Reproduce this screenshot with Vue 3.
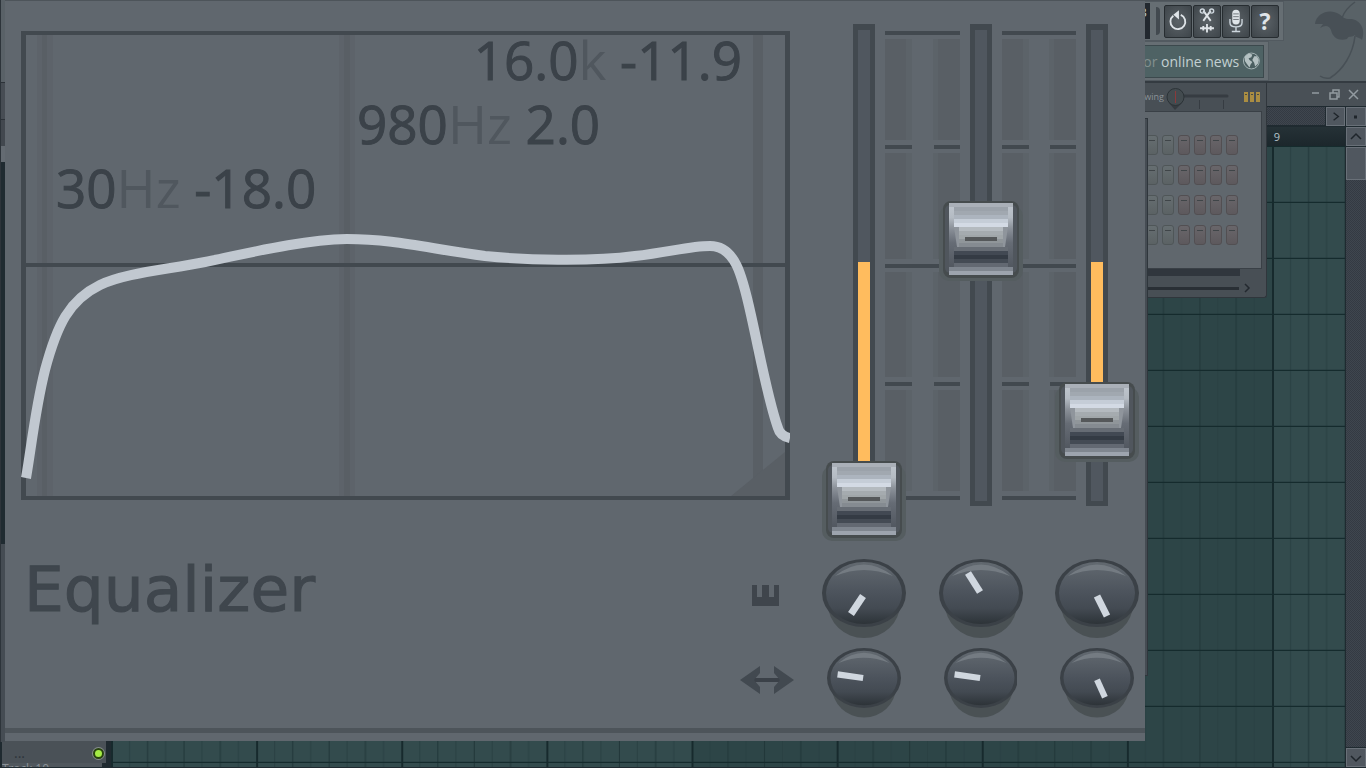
<template>
  <div class="desktop">
    <header class="toolbar">
      <div class="toolbar__groups">
        <div class="toolbar__row">
          <span class="toolbar__lcd">3</span>
          <span class="toolbar__grip" />
          <button v-for="tool in tools" :key="tool" class="tool" :aria-label="tool">
            <svg v-if="tool === 'Undo'" viewBox="0 0 28 33">
              <path d="M9 10.500 A8 8 0 1 0 17 9.500" class="stroke" />
              <path d="M15 4.500 V14.500 L9 9.500 Z" class="fill" />
            </svg>
            <svg v-else-if="tool === 'Cut'" viewBox="0 0 28 33">
              <path d="M10 16 L18 5 M18 16 L10 5" class="stroke" />
              <circle cx="9" cy="5.500" r="2.200" class="thin" />
              <circle cx="19" cy="5.500" r="2.200" class="thin" />
              <path d="M6.500 24 H21.500 M10 21.500 V26.500 M14 19.500 V28.500 M18 21.500 V26.500" class="stroke" />
            </svg>
            <svg v-else-if="tool === 'Record'" viewBox="0 0 28 33">
              <rect x="10" y="4" width="8" height="16" rx="4" class="fill" />
              <path d="M11 8.500 H17 M11 11.500 H17 M11 14.500 H17" stroke="#6a7076" />
              <path d="M7.500 14 V18 Q7.500 22.500 14 22.500 Q20.500 22.500 20.500 18 V14 M14 23 V27 M9.500 27.500 H18.500" class="thin" />
            </svg>
            <span v-else>?</span>
          </button>
        </div>
        <div class="toolbar__row toolbar__row--news">
          <a href="#" class="news">
            <span class="news__text"><i>Click for</i> online news</span>
            <svg class="news__globe" viewBox="0 0 18 18">
              <circle cx="9" cy="9" r="8.500" fill="#4b5f61" stroke="#a9b8b9" />
              <path d="M2 4 L6 1 L10 2 L9 5 L6 6 L7 8 L10 10 L8 13 L7 16 L4 12 L2 9 Z" fill="#b4c1c2" />
              <path d="M12 4 L15 4 L17 8 L16 12 L13 15 L12 11 L10 8 Z" fill="#b4c1c2" />
            </svg>
          </a>
        </div>
      </div>
      <svg class="toolbar__logo" viewBox="0 0 60 80">
        <path d="M9 23 C10 12 24 7 33 13 C37 16 38 18 44 18 C54 18 60 28 56 39 C54 36 49 37 49 34 C46 37 43 34 41 38 C34 40 27 38 25 29 C23 24 19 24 14 27 L17 23 Z" />
        <path d="M36 17 Q39 8 49 1 M49 35 C47 53 37 69 24 77 Q18 78 14 75" />
      </svg>
    </header>

    <main class="playlist">
      <div class="playlist__title">
        <button aria-label="Minimize"><svg viewBox="0 0 18 18"><path d="M5 7 H12" stroke-width="2" /></svg></button>
        <button aria-label="Restore"><svg viewBox="0 0 18 18"><path d="M4 7 H11 V13 H4 Z M7 7 V4 H13 V11 H11" /></svg></button>
        <button aria-label="Close"><svg viewBox="0 0 18 18"><path d="M4 4 L13 13 M13 4 L4 13" /></svg></button>
      </div>
      <div class="playlist__hscroll hatch" />
      <button class="key key--next" aria-label="Scroll right"><svg viewBox="0 0 18 18"><path d="M7 5 L12 9 L7 13" /></svg></button>
      <button class="key key--menu" aria-label="Zoom"><svg viewBox="0 0 18 18"><path d="M7 9 H10" /></svg></button>
      <div class="playlist__ruler"><span>9</span></div>
      <button class="key key--up" aria-label="Scroll up"><svg viewBox="0 0 18 18"><path d="M4 11 L9 6 L14 11" /></svg></button>
      <div class="playlist__tracks">
        <div class="track">
          <span class="track__dots">...</span>
          <span class="track__led" />
        </div>
        <div class="track-name">Track 10</div>
      </div>
      <svg class="playlist__grid">
        <defs>
          <pattern id="shade" width="1161" height="56" patternUnits="userSpaceOnUse">
            <rect width="1161" height="56" fill="#2d4547" />
            <rect width="581" height="56" fill="#334b4d" />
          </pattern>
          <pattern id="bars" width="145.125" height="56" patternUnits="userSpaceOnUse">
            <path d="M18.600 0 V56 M54.600 0 V56 M91 0 V56 M127.400 0 V56" stroke="#294042" />
            <path d="M36.600 0 V56 M73 0 V56 M109.300 0 V56" stroke="#203638" />
            <path d="M1 0 V56" stroke="#172a2d" stroke-width="2" />
          </pattern>
          <pattern id="rows" y="1" width="56" height="56" patternUnits="userSpaceOnUse">
            <path d="M0 55.500 H56" stroke="#152b2d" stroke-width="1.500" />
          </pattern>
        </defs>
        <rect v-for="p in ['shade', 'bars', 'rows']" :key="p" width="100%" height="100%" :fill="`url(#${p})`" />
      </svg>
      <div class="playlist__vscroll hatch"><span /></div>
      <button class="key key--down" aria-label="Scroll down"><svg viewBox="0 0 18 18"><path d="M4 7 L9 12 L14 7" /></svg></button>
    </main>

    <aside class="edge">
      <span v-for="n in 6" :key="n" :class="`edge__part edge__part--${n}`" />
    </aside>

    <!-- Channel rack window -->
    <section class="rack">
      <div class="rack__top">
        <span>Swing</span>
        <svg class="rack__swing" viewBox="0 0 64 28">
          <path d="M16 13 H62" stroke="#363c42" stroke-width="3" stroke-linecap="round" />
          <path d="M10.500 18 V26 M34.500 17 V26 M58.500 17 V26" stroke="#363c42" />
          <path d="M4 20 L10 27 L17 20 Z" fill="#353b40" />
          <circle cx="10.500" cy="14" r="8.500" fill="#434b4f" stroke="#2c3337" />
          <path d="M10.500 8 V20" stroke="#8a3a3b" />
        </svg>
        <svg class="rack__leds" viewBox="0 0 16 10">
          <path d="M0 0 H4 V10 H0 Z M6 0 H10 V10 H6 Z M12 0 H16 V10 H12 Z" fill="#aa8d42" />
          <path d="M1 2.500 H3 M7 2.500 H9 M13 2.500 H15" stroke="#4a4b43" />
        </svg>
      </div>
      <div class="rack__body">
        <div v-for="r in 4" :key="r" class="rack__row">
          <button
              v-for="s in 16"
              :key="s"
              class="step"
              :class="{ 'step--alt': s > 12 }"
              :aria-label="`Channel ${r} step ${s}`"
          />
        </div>
      </div>
      <div class="rack__bottom">
        <div class="rack__bar" />
        <div class="rack__scroll">
          <span />
          <svg viewBox="0 0 8 10"><path d="M2 1 L6 5 L2 9" fill="none" stroke="#23292f" stroke-width="1.500" /></svg>
        </div>
      </div>
    </section>

    <div class="mixer" />

    <!-- Equalizer -->
    <section class="eq">
      <div class="eq__body">
        <div class="graph">
          <svg class="graph__plot" viewBox="21 31 769 469" preserveAspectRatio="none">
            <g fill="#595f65">
              <path d="M37 35 H53 V496 H37 Z M339 35 H355 V496 H339 Z" opacity="0.4" />
              <path d="M42 35 H47 V496 H42 Z M344 35 H350 V496 H344 Z M753 35 H763 V496 H753 Z" />
              <path d="M731 496 L785 452 V496 Z" />
            </g>
            <path d="M26 265 H785" stroke="#42494f" stroke-width="4" />
            <path :d="curve" class="graph__curve" />
          </svg>
          <p v-for="b in bands" :key="b.freq" class="graph__label" :class="`graph__label--${b.id}`">
            {{ b.freq }}<span>{{ b.unit }}</span> {{ b.gain.toFixed(1) }}
          </p>
        </div>

        <div class="faders">
          <template v-for="(b, i) in bands.toReversed()" :key="b.id">
            <div v-if="i" class="scale">
              <span v-for="n in 4" :key="n" class="scale__cell" :class="{ 'scale__cell--full': n % 2, 'scale__cell--outer': n % 3 === 1 }"><i /><i /></span>
              <span class="scale__end" />
            </div>
            <label class="fader">
              <span v-if="b.gain < 0" class="fader__fill" :style="{ height: `${-b.gain * 12}px` }" />
              <svg class="fader__cap" viewBox="0 0 84 84" :style="{ top: `${capTop(b)}px` }">
                <defs>
                  <linearGradient id="side" x2="0" y2="1">
                    <stop offset="0" stop-color="#c0c7cf" />
                    <stop offset="0.2" stop-color="#b4bbc3" />
                    <stop offset="0.35" stop-color="#8b9199" />
                    <stop offset="0.55" stop-color="#666c75" />
                    <stop offset="1" stop-color="#4b5159" />
                  </linearGradient>
                </defs>
                <rect x="0" y="7" width="84" height="75" rx="10" fill="#555d60" />
                <rect x="4" y="2" width="76" height="77" rx="8" fill="#464c4e" />
                <rect x="6" y="6" width="72" height="68" rx="5" fill="#50565d" />
                <rect x="10" y="4" width="64" height="72" fill="url(#side)" />
                <path d="M15 28 H69 L66 48 H18 Z" fill="#8f959c" />
                <rect
                    v-for="(s, k) in capRows"
                    :key="k"
                    :x="10 + s[0]"
                    :y="4 + k * 4"
                    :width="64 - 2 * s[0]"
                    height="4"
                    :fill="s[1]"
                />
                <rect x="26" y="38" width="32" height="4" fill="#55585a" />
              </svg>
              <input v-model.number="b.gain" type="range" min="-18" max="18" step="0.1" :aria-label="`${b.freq}${b.unit} gain`">
            </label>
          </template>
        </div>

        <div class="caption">
          <h1>Equalizer</h1>
          <div class="caption__icons">
            <svg viewBox="0 0 54 30"><path d="M12 4 V25 H39 V4 H34 V16 H29 V4 H22 V16 H17 V4 Z" fill="#3f454c" /></svg>
            <svg viewBox="0 0 54 30">
              <path d="M4 15 H50" stroke="#3b4148" stroke-width="4" />
              <path d="M20 1 L0 15 L20 29 V22 L14 15 L20 8 Z M34 1 L54 15 L34 29 V22 L40 15 L34 8 Z" fill="#424950" />
            </svg>
          </div>
        </div>

        <div class="knobs">
          <div v-for="row in knobRows" :key="row.name" class="knobs__row" :class="`knobs__row--${row.name}`">
            <label v-for="(k, i) in row.knobs" :key="i" class="knob">
              <svg viewBox="0 0 84 81">
                <defs>
                  <linearGradient id="knob" x2="0" y2="1">
                    <stop offset="0" stop-color="#626970" />
                    <stop offset="0.5" stop-color="#4c535c" />
                    <stop offset="0.75" stop-color="#434a52" />
                    <stop offset="1" stop-color="#2d3338" />
                  </linearGradient>
                </defs>
                <ellipse cx="42" cy="45" rx="36" ry="34" fill="#4a5154" />
                <ellipse cx="42" cy="34" rx="42" ry="34" fill="#3b4147" />
                <ellipse cx="42" cy="34" rx="38" ry="31" fill="url(#knob)" />
                <path d="M13 17 Q42 -6 71 17 Q42 5 13 17 Z" fill="#747b82" />
                <path :d="k" stroke="#d0d7df" stroke-width="7" />
              </svg>
              <input type="range" :aria-label="`Band ${i + 1} ${row.name}`">
            </label>
          </div>
        </div>
      </div>
      <div class="eq__rule" />
    </section>
  </div>
</template>

<script setup>
import { reactive } from 'vue'

const tools = ['Undo', 'Cut', 'Record', 'Help']

const bands = reactive([
  { id: 'high', freq: '16.0', unit: 'k', gain: -11.9 },
  { id: 'mid', freq: '980', unit: 'Hz', gain: 2 },
  { id: 'low', freq: '30', unit: 'Hz', gain: -18 },
])

const curve = 'M26 478 C31 450 35 410 45 370 C57 325 69 300 100 285 C125 273 165 270 205 262 ' +
  'C245 254 300 240 347 239 C395 239 430 249 485 256 C525 260 590 262 635 256 ' +
  'C670 252 690 246 710 246 C735 246 742 274 751 315 C760 355 768 400 778 428 Q780 436 790 438'

// [inset, colour] of each strip of the metal cap, from top to bottom
const capRows = [
  [0, '#aab0b8'], [5, '#9ba2aa'], [5, '#a1a8b0'], [5, '#acb4be'], [5, '#c5cdd7'], [5, '#d3dae4'],
  [10, '#b4babf'], [10, '#a5abaf'], [10, '#a0a6a9'], [10, '#90969a'], [10, '#858b91'], [5, '#666c74'],
  [5, '#424953'], [5, '#343b44'], [5, '#444b54'], [5, '#636972'], [0, '#7f868f'], [0, '#9da4ae'],
]

const knobRows = [
  { name: 'frequency', knobs: ['M41 37 L29 55', 'M29 14 L41 33', 'M42 37 L52 57'] },
  { name: 'bandwidth', knobs: ['M12 30 L41 34', 'M12 30 L41 34', 'M42 36 L51 56'] },
]

function capTop(b) { return Math.round(229 - b.gain * 13) }
</script>

<style>
html, body { background: #1f2a30; overflow: hidden; }
</style>

<style scoped>
.desktop {
  position: relative;
  display: flex;
  flex-direction: column;
  height: 100vh;
  overflow: hidden;
  font-family: 'Open Sans', 'Noto Sans', sans-serif;
  background: #1f2a30;
}
.desktop * { box-sizing: border-box; }

button {
  padding: 0;
  border: none;
  background: none;
  cursor: pointer;
}
svg { display: block; }

/* Toolbar */
.toolbar {
  display: flex;
  justify-content: flex-end;
  height: 83px;
  flex-shrink: 0;
  background: #596267;
  border-bottom: 2px solid #343b41;
  border-top: 1px solid #4c5359;
}
.toolbar__groups {
  display: flex;
  flex-direction: column;
  width: 200px;
  margin-right: 22px;
}
.toolbar__row {
  display: flex;
  align-items: center;
  justify-content: flex-end;
  gap: 1px;
  height: 40px;
  padding-right: 4px;
  background: #666e73;
  border: 1px solid #525a60;
}
.toolbar__row--news { margin-right: 15px; }
.toolbar__lcd {
  height: 36px;
  padding: 0 3px 0 30px;
  font-size: 13px;
  line-height: 18px;
  color: #b9cbd6;
  background: #22282f;
}
.toolbar__grip {
  width: 4px;
  height: 28px;
  margin: 0 3px 0 5px;
  border-radius: 0 4px 4px 0;
  background: #42494f;
}
.tool {
  width: 28px;
  height: 33px;
  border: 1px solid #272d31;
  border-radius: 2px;
  background: radial-gradient(#5b6267, #3e454a);
  font-family: 'Open Sans', sans-serif;
  font-size: 23px;
  font-weight: 700;
  line-height: 28px;
  color: #dfe4e8;
}
.tool .stroke { fill: none; stroke: #dfe4e8; stroke-width: 2; }
.tool .thin { fill: none; stroke: #cdd6dd; stroke-width: 1.500; }
.tool .fill { fill: #dfe4e8; }
.news {
  display: flex;
  align-items: center;
  justify-content: flex-end;
  gap: 4px;
  width: 160px;
  height: 33px;
  padding-right: 3px;
  border: 1px solid #3c494d;
  background: #4e6264;
  font-size: 14px;
  text-decoration: none;
  white-space: nowrap;
  color: #c3d0d2;
}
.news i { font-style: normal; color: #82908f; }
.news__globe { width: 18px; height: 18px; }
.toolbar__logo { width: 60px; height: 80px; }
.toolbar__logo path:first-child { fill: #485056; }
.toolbar__logo path:last-child { fill: none; stroke: #485056; stroke-width: 1.500; }

/* Playlist */
.playlist {
  flex: 1;
  display: grid;
  grid-template-columns: 110px 1fr 19px 20px;
  grid-template-rows: 23px 20px 20px 1fr 20px;
  column-gap: 1px;
  padding-bottom: 1px;
  min-height: 0;
}
.playlist__title {
  grid-column: 1 / -1;
  display: flex;
  align-items: center;
  justify-content: flex-end;
  gap: 1px;
  padding-right: 3px;
  background: #495056;
}
.playlist__title button { width: 18px; height: 18px; }
.playlist__title path { fill: none; stroke: #929aa0; stroke-width: 1.500; }
.hatch {
  background: repeating-conic-gradient(#343a43 0 25%, #3f464e 0 50%) 0 0 / 2px 2px;
}
.playlist__hscroll { grid-column: 1 / 3; grid-row: 2; margin: 1px 0; }
.key {
  margin: 1px 0 0;
  border: 1px solid #697078;
  background: #50575f;
}
.key path { fill: none; stroke: #1f252b; stroke-width: 1.500; }
.key--menu path { stroke-width: 3; }
.key--next { grid-column: 3; grid-row: 2; }
.key--menu { grid-column: 4; grid-row: 2; }
.key--up { grid-column: 4; grid-row: 3; }
.key--down { grid-column: 4; grid-row: 5; }
.playlist__ruler {
  grid-column: 1 / 4;
  grid-row: 3;
  margin-top: 1px;
  padding-right: 65px;
  font-size: 11px;
  line-height: 19px;
  text-align: right;
  color: #b5c4ca;
  background: linear-gradient(#253136, #1c272c);
}
.playlist__tracks {
  grid-column: 1;
  grid-row: 4 / 6;
  display: flex;
  flex-direction: column;
  justify-content: flex-end;
  min-height: 0;
  padding-left: 2px;
}
.track {
  display: flex;
  align-items: flex-end;
  justify-content: space-between;
  height: 54px;
  margin-right: 4px;
  padding: 0 2px 3px 12px;
  background: #4a5157;
}
.track__dots {
  font-size: 14px;
  line-height: 14px;
  color: #2d343a;
}
.track__led {
  width: 11px;
  height: 11px;
  margin-bottom: 1px;
  border: 2px solid #28440f;
  border-radius: 50%;
  background: #a5ec45;
  box-shadow: 0 0 0 1px #868d8c;
}
.track-name {
  height: 4px;
  margin-right: 8px;
  overflow: hidden;
  font-size: 12px;
  line-height: 12px;
  color: #8a9197;
  background: #50575d;
}
.playlist__grid {
  grid-column: 2 / 4;
  grid-row: 4 / 6;
  width: 100%;
  height: 100%;
}
.playlist__vscroll { grid-column: 4; grid-row: 4; margin-top: 1px; }
.playlist__vscroll span {
  display: block;
  height: 33px;
  border: 1px solid #697078;
  background: #50575f;
}

/* Slivers of the windows along the left side */
.edge {
  position: absolute;
  inset: 0 auto 26px 0;
  display: flex;
  flex-direction: column;
  width: 5px;
}
.edge__part { border-left: 1px solid #2d343a; }
.edge__part--1 { height: 82px; background: #596167; }
.edge__part--2 { height: 37px; background: #474d54; border-top: 1px solid #2c3238; }
.edge__part--3 { height: 27px; background: #42484f; border-top: 1px solid #2c3238; }
.edge__part--4 { height: 16px; background: #646b72; }
.edge__part--5 { height: 382px; background: #202b31; }
.edge__part--6 { flex: 1; background: #454c53; }

/* Channel rack */
.rack {
  position: absolute;
  top: 83px;
  right: 99px;
  width: 320px;
  height: 215px;
  padding-right: 4px;
  border-right: 1px solid #30363c;
  border-bottom: 1px solid #30363c;
  border-bottom-right-radius: 3px;
  background: #484f55;
}
.rack__top {
  display: flex;
  align-items: center;
  justify-content: flex-end;
  height: 28px;
  padding-right: 2px;
  font-size: 9px;
  line-height: 12px;
  color: #8c9399;
}
.rack__swing { width: 64px; height: 28px; margin-left: 1px; }
.rack__leds { width: 16px; height: 10px; margin-left: 15px; }
.rack__body {
  display: flex;
  flex-direction: column;
  align-items: flex-end;
  gap: 10px;
  height: 158px;
  padding: 23px 23px 0 0;
  border: 1px solid #3a4046;
  background: #60676d;
}
.rack__row { display: flex; gap: 4px; }
.step {
  width: 12px;
  height: 20px;
  padding-bottom: 9px;
  border: 1px solid #4f5658;
  border-radius: 3px;
  background: linear-gradient(#666e71, #5b6264);
}
.step::after {
  content: '';
  display: block;
  width: 6px;
  height: 1px;
  margin: 0 auto;
  background: #3f4548;
}
.step--alt { background: linear-gradient(#69666a, #5d595d); border-color: #524f52; }
.rack__bar { height: 7px; margin-right: 22px; background: #30363d; }
.rack__scroll {
  display: flex;
  align-items: center;
  gap: 4px;
  height: 24px;
  padding-right: 11px;
}
.rack__scroll span { flex: 1; height: 3px; background: #292f35; }
.rack__scroll svg { width: 8px; height: 10px; }

.mixer {
  position: absolute;
  top: 118px;
  right: 218px;
  width: 320px;
  height: 558px;
  border: 1px solid #2f363c;
  background: #454c53;
}

/* Equalizer panel */
.eq {
  position: absolute;
  top: 0;
  left: 5px;
  right: 221px;
  padding-bottom: 8px;
  border-top: 1px solid #4d545a;
  background: #60676e;
}
.eq__body {
  display: grid;
  grid-template-columns: minmax(0, 1fr) 317px;
  column-gap: 32px;
  row-gap: 53px;
  padding: 23px 6px 9px 16px;
}
.eq__rule { height: 5px; background: #4d545a; }

.graph {
  position: relative;
  height: 469px;
  margin-top: 7px;
  border: solid #42494f;
  border-width: 4px 5px;
}
.graph__plot {
  position: absolute;
  top: -4px;
  left: -5px;
  width: calc(100% + 10px);
  height: calc(100% + 8px);
}
.graph__curve { fill: none; stroke: #c1c8d0; stroke-width: 10; }
.graph__label {
  position: relative;
  margin: 0;
  font-size: 53px;
  line-height: 64px;
  white-space: nowrap;
  color: #3b4249;
  -webkit-text-stroke: 1px #3b4249;
}
.graph__label span {
  color: #50575e;
  -webkit-text-stroke: 0;
}
.graph__label--high { margin-top: -7px; padding-right: 43px; text-align: right; }
.graph__label--mid { padding-left: 331px; }
.graph__label--low { padding-left: 30px; }

/* Faders */
.faders {
  display: flex;
  gap: 10px;
  height: 482px;
  padding: 0 31px;
}
.fader {
  position: relative;
  width: 22px;
  border: 5px solid #42494f;
  border-top-width: 6px;
  background: #50575f;
}
.fader__fill {
  display: block;
  width: 100%;
  margin-top: 232px;
  background: #ffbc5e;
}
.fader__cap {
  position: absolute;
  left: -36px;
  z-index: 1;
  width: 84px;
  height: 84px;
  margin-top: -34px;
}
.fader input {
  position: absolute;
  inset: -30px -30px;
  z-index: 2;
  width: 72px;
  height: 530px;
  margin: 0;
  writing-mode: vertical-lr;
  direction: rtl;
  opacity: 0;
  cursor: pointer;
}
.scale {
  flex: 1;
  display: flex;
  flex-direction: column;
  padding: 7px 0 6px;
}
.scale__cell {
  flex: 1;
  display: flex;
  justify-content: space-between;
  padding: 8px 0 5px;
  background:
      linear-gradient(#42494f, #42494f) 0 0 / 27px 4px no-repeat,
      linear-gradient(#42494f, #42494f) 100% 0 / 26px 4px no-repeat;
}
.scale__cell--full {
  background: linear-gradient(#42494f, #42494f) 0 0 / 100% 4px no-repeat;
}
.scale__cell--outer { flex: 0 0 114px; }
.scale__cell i {
  width: 27px;
  background: #595f65;
  border-right: 6px solid #5c6369;
}
.scale__cell i:last-child {
  border-right: none;
  border-left: 5px solid #5c6369;
}
.scale__end { height: 4px; background: #42494f; }

/* Caption and knobs */
.caption {
  display: flex;
  justify-content: space-between;
  padding-left: 3px;
}
.caption h1 {
  margin: 0;
  font-family: 'DejaVu Sans', sans-serif;
  font-size: 63px;
  font-weight: 400;
  line-height: 62px;
  color: #3f464d;
  -webkit-text-stroke: 1px #3f464d;
}
.caption__icons {
  display: flex;
  flex-direction: column;
  gap: 54px;
  padding-top: 22px;
  margin-right: -4px;
}
.caption__icons svg { width: 54px; height: 30px; }
.knobs {
  display: flex;
  flex-direction: column;
  gap: 8px;
}
.knobs__row { display: flex; justify-content: space-between; }
.knob { position: relative; width: 84px; }
.knobs__row--bandwidth { padding: 0 5px; }
.knobs__row--bandwidth .knob { width: 74px; }
.knob input {
  position: absolute;
  inset: 0;
  width: 100%;
  height: 100%;
  margin: 0;
  opacity: 0;
  cursor: pointer;
}
</style>
